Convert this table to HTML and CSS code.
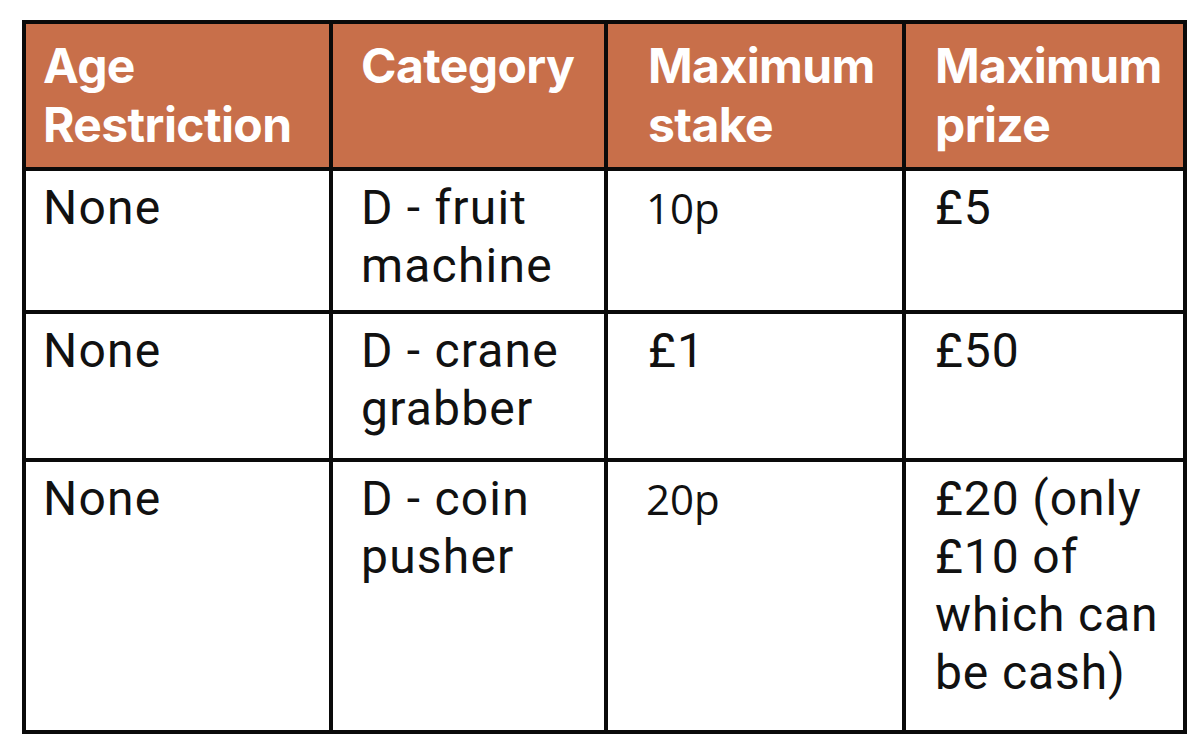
FILE: index.html
```html
<!DOCTYPE html>
<html>
<head>
<meta charset="utf-8">
<link rel="stylesheet" href="styles.css">
</head>
<body>
<table class="limits">
  <colgroup>
    <col class="c1"><col class="c2"><col class="c3"><col class="c4">
  </colgroup>
  <thead>
    <tr class="head">
      <th class="p1">Age<br>Restriction</th>
      <th class="p2">Category</th>
      <th class="p3">Maximum<br>stake</th>
      <th class="p4">Maximum<br>prize</th>
    </tr>
  </thead>
  <tbody>
    <tr class="r1">
      <td class="p1">None</td>
      <td class="p2">D - fruit<br>machine</td>
      <td class="p3 alt">10p</td>
      <td class="p4">£5</td>
    </tr>
    <tr class="r2">
      <td class="p1">None</td>
      <td class="p2">D - crane<br>grabber</td>
      <td class="p3">£1</td>
      <td class="p4">£50</td>
    </tr>
    <tr class="r3">
      <td class="p1">None</td>
      <td class="p2">D - coin<br>pusher</td>
      <td class="p3 alt">20p</td>
      <td class="p4">£20 (only<br>£10 of<br>which can<br>be cash)</td>
    </tr>
  </tbody>
</table>
</body>
</html>
```
FILE: styles.css
```css
html, body {
  margin: 0;
  padding: 0;
  background: #ffffff;
}
body {
  padding: 20px 0 0 22px;
}
.limits {
  border-collapse: collapse;
  table-layout: fixed;
  width: 1165px;
  font-family: Roboto, "Liberation Sans", sans-serif;
  color: #111111;
}
.c1 { width: 307px; }
.c2 { width: 275px; }
.c3 { width: 298px; }
.c4 { width: 281px; }
.limits th,
.limits td {
  border: 4px solid #0a0a0a;
  vertical-align: top;
  text-align: left;
  box-sizing: border-box;
}
.head th {
  background: #c86f4a;
  color: #ffffff;
  font-family: Inter, Roboto, sans-serif;
  font-weight: 700;
  font-size: 48px;
  letter-spacing: -0.6px;
  line-height: 59px;
  height: 147px;
  padding-top: 12px;
}
.limits td {
  font-size: 48px;
  letter-spacing: 1.2px;
  line-height: 58px;
  padding-top: 8px;
  font-weight: 400;
}
.r1 td { height: 143px; }
.r2 td { height: 148px; }
.r3 td { height: 272px; }
.p1 { padding-left: 17px; }
.p2 { padding-left: 28px; }
.p3 { padding-left: 40px; }
.p4 { padding-left: 29px; }
.limits td.p4 { letter-spacing: 0.9px; }
.limits td.alt {
  font-family: "Open Sans", Roboto, sans-serif;
  font-size: 42px;
  letter-spacing: 0;
  padding-left: 38px;
}
```
